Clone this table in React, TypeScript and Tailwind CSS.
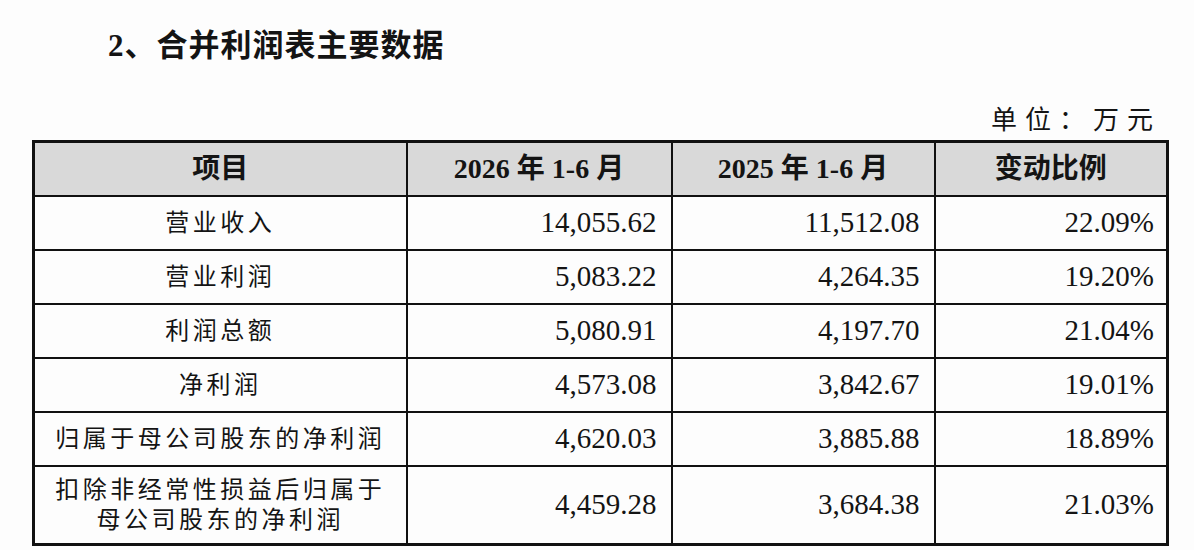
const rows = [
  { name: ["营业收入"], a: "14,055.62", b: "11,512.08", c: "22.09%" },
  { name: ["营业利润"], a: "5,083.22", b: "4,264.35", c: "19.20%" },
  { name: ["利润总额"], a: "5,080.91", b: "4,197.70", c: "21.04%" },
  { name: ["净利润"], a: "4,573.08", b: "3,842.67", c: "19.01%" },
  { name: ["归属于母公司股东的净利润"], a: "4,620.03", b: "3,885.88", c: "18.89%" },
  { name: ["扣除非经常性损益后归属于", "母公司股东的净利润"], a: "4,459.28", b: "3,684.38", c: "21.03%" },
];

const font = { fontFamily: '"Liberation Serif", "Noto Sans CJK SC", serif' };

export default function App() {
  return (
    <div className="h-[550px] w-[1194px] bg-[#fdfdfd] text-[#141414]" style={font}>
      {/* title */}
      <div className="pl-[108px] pt-[26px] text-[31px] font-bold leading-[40px] tracking-[1px]">
        2、合并利润表主要数据
      </div>

      {/* unit */}
      <div className="mt-[40px] flex justify-end pr-[41px]">
        <span className="mr-[-8px] text-[26px] leading-[30px] tracking-[8px]">单位：万元</span>
      </div>

      <div className="mt-[4px] pl-[32px]">
        <table className="w-[1134px] table-fixed border-collapse border-[3px] border-[#111]">
          <colgroup>
            <col className="w-[373px]" />
            <col className="w-[265px]" />
            <col className="w-[263px]" />
            <col className="w-[233px]" />
          </colgroup>
          <thead>
            <tr className="h-[54px] bg-[#d9d9d9] text-[28px] font-bold">
              <th className="border-[2px] border-[#111] text-center">项目</th>
              <th className="border-[2px] border-[#111] text-center">2026 年 1-6 月</th>
              <th className="border-[2px] border-[#111] text-center">2025 年 1-6 月</th>
              <th className="border-[2px] border-[#111] text-center">变动比例</th>
            </tr>
          </thead>
          <tbody>
            {rows.map((r, i) => (
              <tr key={i} className={i === rows.length - 1 ? "h-[79px]" : "h-[54px]"}>
                <td className="border-[2px] border-[#111] text-center text-[24px] leading-[30px] tracking-[3.5px]">
                  {r.name.map((n) => (
                    <div key={n}>{n}</div>
                  ))}
                </td>
                <td className="border-[2px] border-[#111] pr-[14px] text-right text-[29px]">{r.a}</td>
                <td className="border-[2px] border-[#111] pr-[14px] text-right text-[29px]">{r.b}</td>
                <td className="border-[2px] border-[#111] pr-[12px] text-right text-[29px]">{r.c}</td>
              </tr>
            ))}
          </tbody>
        </table>
      </div>
    </div>
  );
}
